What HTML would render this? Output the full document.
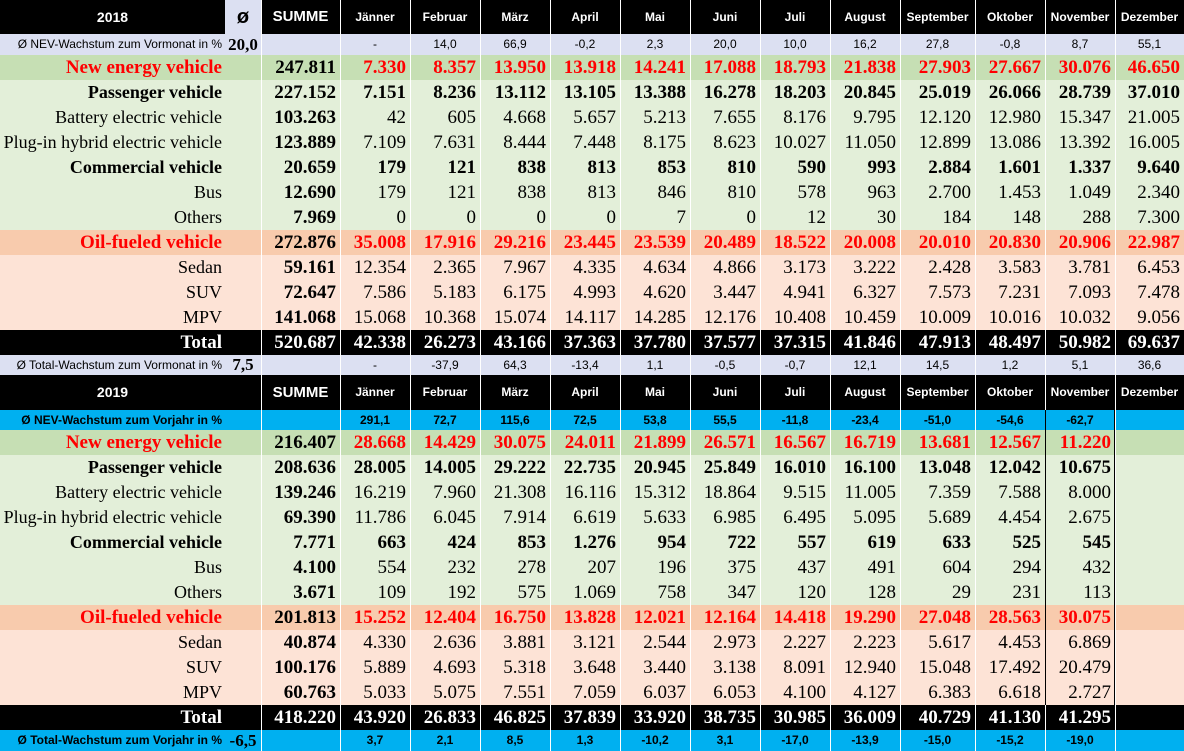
<!DOCTYPE html>
<html><head><meta charset="utf-8"><style>
*{margin:0;padding:0;box-sizing:border-box}
body{width:1184px;height:751px;overflow:hidden;background:#fff}
table{table-layout:fixed;border-collapse:separate;border-spacing:0;width:1184px}
td{box-shadow:inset 1px 0 #fff;text-align:right;padding:0 4px 0 0;white-space:nowrap;overflow:hidden;font-family:"Liberation Serif",serif;font-size:19px;vertical-align:middle;line-height:25px;height:25px}
td.l{box-shadow:none;font-size:18px;padding-right:3px}
td.o{box-shadow:none;padding:0;text-align:center;font-weight:bold;font-size:17px}
td.s{font-weight:bold}
tr.h td{background:#000;color:#fff;font-family:"Liberation Sans",sans-serif;font-weight:bold;font-size:12px;text-align:center;height:34px;line-height:34px;padding:0}
tr.h td.y{font-size:14px;box-shadow:none}
tr.h td.su{font-size:15px}
tr.h td.oh{background:#dce0f2;color:#000;font-size:20px;box-shadow:none}
tr.h2 td{height:35px;line-height:35px}
tr.h2 td.oh{background:#000;color:#000}
tr.sm td{background:#dce0f2;font-family:"Liberation Sans",sans-serif;font-size:12px;text-align:center;height:21px;line-height:21px;padding:0}
tr.sm2 td{height:20px;line-height:20px}
tr.sm td.l{text-align:right;padding-right:3px}
tr.sm td.o{font-family:"Liberation Serif",serif;font-size:17px;font-weight:bold}
tr.bl td{background:#00b0f0;font-weight:bold}
tr.ne td{background:#c6dfb4}
tr.ne td,tr.oil td{color:#f00;font-weight:bold}
tr.ne td.s,tr.oil td.s{color:#000}
tr.ne td.l,tr.oil td.l{font-size:19px}
tr.lg td{background:#e3efd9}
tr.oil td{background:#f8cbad}
tr.pe td{background:#fde3d6}
tr.b td{font-weight:bold}
tr.tot td{background:#000;color:#fff;font-weight:bold}
tr.tot td.l{font-size:19px}
td.nv{box-shadow:inset 1px 0 #000,inset -1px 0 #000}
</style></head><body>
<table>
<colgroup><col style="width:225px"><col style="width:36px"><col style="width:79px"><col style="width:70px"><col style="width:70px"><col style="width:70px"><col style="width:70px"><col style="width:70px"><col style="width:70px"><col style="width:70px"><col style="width:70px"><col style="width:75px"><col style="width:70px"><col style="width:70px"><col style="width:69px"></colgroup>
<tr class="h"><td class="y">2018</td><td class="oh">ø</td><td class="su">SUMME</td><td>Jänner</td><td>Februar</td><td>März</td><td>April</td><td>Mai</td><td>Juni</td><td>Juli</td><td>August</td><td>September</td><td>Oktober</td><td>November</td><td>Dezember</td></tr>
<tr class="sm"><td class="l">Ø NEV-Wachstum zum Vormonat in %</td><td class="o">20,0</td><td></td><td>-</td><td>14,0</td><td>66,9</td><td>-0,2</td><td>2,3</td><td>20,0</td><td>10,0</td><td>16,2</td><td>27,8</td><td>-0,8</td><td>8,7</td><td>55,1</td></tr>
<tr class="ne"><td class="l">New energy vehicle</td><td class="o"></td><td class="s">247.811</td><td>7.330</td><td>8.357</td><td>13.950</td><td>13.918</td><td>14.241</td><td>17.088</td><td>18.793</td><td>21.838</td><td>27.903</td><td>27.667</td><td>30.076</td><td>46.650</td></tr>
<tr class="lg b"><td class="l">Passenger vehicle</td><td class="o"></td><td class="s">227.152</td><td>7.151</td><td>8.236</td><td>13.112</td><td>13.105</td><td>13.388</td><td>16.278</td><td>18.203</td><td>20.845</td><td>25.019</td><td>26.066</td><td>28.739</td><td>37.010</td></tr>
<tr class="lg"><td class="l">Battery electric vehicle</td><td class="o"></td><td class="s">103.263</td><td>42</td><td>605</td><td>4.668</td><td>5.657</td><td>5.213</td><td>7.655</td><td>8.176</td><td>9.795</td><td>12.120</td><td>12.980</td><td>15.347</td><td>21.005</td></tr>
<tr class="lg"><td class="l">Plug-in hybrid electric vehicle</td><td class="o"></td><td class="s">123.889</td><td>7.109</td><td>7.631</td><td>8.444</td><td>7.448</td><td>8.175</td><td>8.623</td><td>10.027</td><td>11.050</td><td>12.899</td><td>13.086</td><td>13.392</td><td>16.005</td></tr>
<tr class="lg b"><td class="l">Commercial vehicle</td><td class="o"></td><td class="s">20.659</td><td>179</td><td>121</td><td>838</td><td>813</td><td>853</td><td>810</td><td>590</td><td>993</td><td>2.884</td><td>1.601</td><td>1.337</td><td>9.640</td></tr>
<tr class="lg"><td class="l">Bus</td><td class="o"></td><td class="s">12.690</td><td>179</td><td>121</td><td>838</td><td>813</td><td>846</td><td>810</td><td>578</td><td>963</td><td>2.700</td><td>1.453</td><td>1.049</td><td>2.340</td></tr>
<tr class="lg"><td class="l">Others</td><td class="o"></td><td class="s">7.969</td><td>0</td><td>0</td><td>0</td><td>0</td><td>7</td><td>0</td><td>12</td><td>30</td><td>184</td><td>148</td><td>288</td><td>7.300</td></tr>
<tr class="oil"><td class="l">Oil-fueled vehicle</td><td class="o"></td><td class="s">272.876</td><td>35.008</td><td>17.916</td><td>29.216</td><td>23.445</td><td>23.539</td><td>20.489</td><td>18.522</td><td>20.008</td><td>20.010</td><td>20.830</td><td>20.906</td><td>22.987</td></tr>
<tr class="pe"><td class="l">Sedan</td><td class="o"></td><td class="s">59.161</td><td>12.354</td><td>2.365</td><td>7.967</td><td>4.335</td><td>4.634</td><td>4.866</td><td>3.173</td><td>3.222</td><td>2.428</td><td>3.583</td><td>3.781</td><td>6.453</td></tr>
<tr class="pe"><td class="l">SUV</td><td class="o"></td><td class="s">72.647</td><td>7.586</td><td>5.183</td><td>6.175</td><td>4.993</td><td>4.620</td><td>3.447</td><td>4.941</td><td>6.327</td><td>7.573</td><td>7.231</td><td>7.093</td><td>7.478</td></tr>
<tr class="pe"><td class="l">MPV</td><td class="o"></td><td class="s">141.068</td><td>15.068</td><td>10.368</td><td>15.074</td><td>14.117</td><td>14.285</td><td>12.176</td><td>10.408</td><td>10.459</td><td>10.009</td><td>10.016</td><td>10.032</td><td>9.056</td></tr>
<tr class="tot"><td class="l">Total</td><td class="o"></td><td class="s" style="color:#fff">520.687</td><td>42.338</td><td>26.273</td><td>43.166</td><td>37.363</td><td>37.780</td><td>37.577</td><td>37.315</td><td>41.846</td><td>47.913</td><td>48.497</td><td>50.982</td><td>69.637</td></tr>
<tr class="sm sm2"><td class="l">Ø Total-Wachstum zum Vormonat in %</td><td class="o">7,5</td><td></td><td>-</td><td>-37,9</td><td>64,3</td><td>-13,4</td><td>1,1</td><td>-0,5</td><td>-0,7</td><td>12,1</td><td>14,5</td><td>1,2</td><td>5,1</td><td>36,6</td></tr>
<tr class="h h2"><td class="y">2019</td><td class="oh"></td><td class="su">SUMME</td><td>Jänner</td><td>Februar</td><td>März</td><td>April</td><td>Mai</td><td>Juni</td><td>Juli</td><td>August</td><td>September</td><td>Oktober</td><td>November</td><td>Dezember</td></tr>
<tr class="sm sm2 bl"><td class="l">Ø NEV-Wachstum zum Vorjahr in %</td><td class="o"></td><td></td><td>291,1</td><td>72,7</td><td>115,6</td><td>72,5</td><td>53,8</td><td>55,5</td><td>-11,8</td><td>-23,4</td><td>-51,0</td><td>-54,6</td><td class="nv">-62,7</td><td></td></tr>
<tr class="ne"><td class="l">New energy vehicle</td><td class="o"></td><td class="s">216.407</td><td>28.668</td><td>14.429</td><td>30.075</td><td>24.011</td><td>21.899</td><td>26.571</td><td>16.567</td><td>16.719</td><td>13.681</td><td>12.567</td><td class="nv">11.220</td><td></td></tr>
<tr class="lg b"><td class="l">Passenger vehicle</td><td class="o"></td><td class="s">208.636</td><td>28.005</td><td>14.005</td><td>29.222</td><td>22.735</td><td>20.945</td><td>25.849</td><td>16.010</td><td>16.100</td><td>13.048</td><td>12.042</td><td class="nv">10.675</td><td></td></tr>
<tr class="lg"><td class="l">Battery electric vehicle</td><td class="o"></td><td class="s">139.246</td><td>16.219</td><td>7.960</td><td>21.308</td><td>16.116</td><td>15.312</td><td>18.864</td><td>9.515</td><td>11.005</td><td>7.359</td><td>7.588</td><td class="nv">8.000</td><td></td></tr>
<tr class="lg"><td class="l">Plug-in hybrid electric vehicle</td><td class="o"></td><td class="s">69.390</td><td>11.786</td><td>6.045</td><td>7.914</td><td>6.619</td><td>5.633</td><td>6.985</td><td>6.495</td><td>5.095</td><td>5.689</td><td>4.454</td><td class="nv">2.675</td><td></td></tr>
<tr class="lg b"><td class="l">Commercial vehicle</td><td class="o"></td><td class="s">7.771</td><td>663</td><td>424</td><td>853</td><td>1.276</td><td>954</td><td>722</td><td>557</td><td>619</td><td>633</td><td>525</td><td class="nv">545</td><td></td></tr>
<tr class="lg"><td class="l">Bus</td><td class="o"></td><td class="s">4.100</td><td>554</td><td>232</td><td>278</td><td>207</td><td>196</td><td>375</td><td>437</td><td>491</td><td>604</td><td>294</td><td class="nv">432</td><td></td></tr>
<tr class="lg"><td class="l">Others</td><td class="o"></td><td class="s">3.671</td><td>109</td><td>192</td><td>575</td><td>1.069</td><td>758</td><td>347</td><td>120</td><td>128</td><td>29</td><td>231</td><td class="nv">113</td><td></td></tr>
<tr class="oil"><td class="l">Oil-fueled vehicle</td><td class="o"></td><td class="s">201.813</td><td>15.252</td><td>12.404</td><td>16.750</td><td>13.828</td><td>12.021</td><td>12.164</td><td>14.418</td><td>19.290</td><td>27.048</td><td>28.563</td><td class="nv">30.075</td><td></td></tr>
<tr class="pe"><td class="l">Sedan</td><td class="o"></td><td class="s">40.874</td><td>4.330</td><td>2.636</td><td>3.881</td><td>3.121</td><td>2.544</td><td>2.973</td><td>2.227</td><td>2.223</td><td>5.617</td><td>4.453</td><td class="nv">6.869</td><td></td></tr>
<tr class="pe"><td class="l">SUV</td><td class="o"></td><td class="s">100.176</td><td>5.889</td><td>4.693</td><td>5.318</td><td>3.648</td><td>3.440</td><td>3.138</td><td>8.091</td><td>12.940</td><td>15.048</td><td>17.492</td><td class="nv">20.479</td><td></td></tr>
<tr class="pe"><td class="l">MPV</td><td class="o"></td><td class="s">60.763</td><td>5.033</td><td>5.075</td><td>7.551</td><td>7.059</td><td>6.037</td><td>6.053</td><td>4.100</td><td>4.127</td><td>6.383</td><td>6.618</td><td class="nv">2.727</td><td></td></tr>
<tr class="tot"><td class="l">Total</td><td class="o"></td><td class="s" style="color:#fff">418.220</td><td>43.920</td><td>26.833</td><td>46.825</td><td>37.839</td><td>33.920</td><td>38.735</td><td>30.985</td><td>36.009</td><td>40.729</td><td>41.130</td><td>41.295</td><td></td></tr>
<tr class="sm bl"><td class="l">Ø Total-Wachstum zum Vorjahr in %</td><td class="o">-6,5</td><td></td><td>3,7</td><td>2,1</td><td>8,5</td><td>1,3</td><td>-10,2</td><td>3,1</td><td>-17,0</td><td>-13,9</td><td>-15,0</td><td>-15,2</td><td>-19,0</td><td></td></tr>
</table>
</body></html>
